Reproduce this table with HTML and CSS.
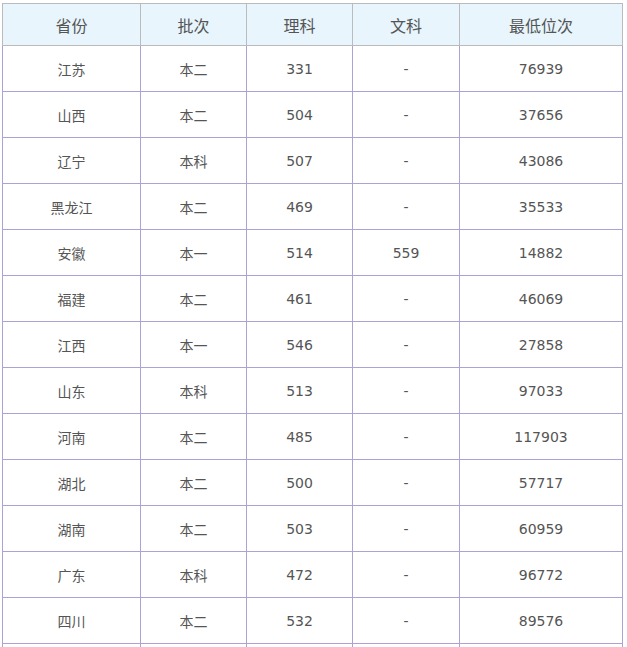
FILE: index.html
```html
<!DOCTYPE html>
<html lang="zh-CN">
<head>
<meta charset="utf-8">
<title>分数线</title>
<link rel="stylesheet" href="styles.css">
</head>
<body>
<table class="score-table">
  <colgroup>
    <col class="c1"><col class="c2"><col class="c3"><col class="c4"><col class="c5">
  </colgroup>
  <thead>
    <tr><th>省份</th><th>批次</th><th>理科</th><th>文科</th><th>最低位次</th></tr>
  </thead>
  <tbody>
    <tr><td>江苏</td><td>本二</td><td>331</td><td>-</td><td>76939</td></tr>
    <tr><td>山西</td><td>本二</td><td>504</td><td>-</td><td>37656</td></tr>
    <tr><td>辽宁</td><td>本科</td><td>507</td><td>-</td><td>43086</td></tr>
    <tr><td>黑龙江</td><td>本二</td><td>469</td><td>-</td><td>35533</td></tr>
    <tr><td>安徽</td><td>本一</td><td>514</td><td>559</td><td>14882</td></tr>
    <tr><td>福建</td><td>本二</td><td>461</td><td>-</td><td>46069</td></tr>
    <tr><td>江西</td><td>本一</td><td>546</td><td>-</td><td>27858</td></tr>
    <tr><td>山东</td><td>本科</td><td>513</td><td>-</td><td>97033</td></tr>
    <tr><td>河南</td><td>本二</td><td>485</td><td>-</td><td>117903</td></tr>
    <tr><td>湖北</td><td>本二</td><td>500</td><td>-</td><td>57717</td></tr>
    <tr><td>湖南</td><td>本二</td><td>503</td><td>-</td><td>60959</td></tr>
    <tr><td>广东</td><td>本科</td><td>472</td><td>-</td><td>96772</td></tr>
    <tr><td>四川</td><td>本二</td><td>532</td><td>-</td><td>89576</td></tr>
    <tr><td></td><td></td><td></td><td></td><td></td></tr>
  </tbody>
</table>
</body>
</html>
```

FILE: styles.css
```css
html, body {
  margin: 0;
  padding: 0;
  background: #fff;
}
body {
  padding: 3px 0 0 2px;
  font-family: "DejaVu Sans", "Noto Sans CJK SC", sans-serif;
  color: #555;
}
.score-table {
  border-collapse: collapse;
  table-layout: fixed;
  width: 620px;
}
.c1 { width: 138px; }
.c2 { width: 106px; }
.c3 { width: 106px; }
.c4 { width: 107px; }
.c5 { width: 163px; }
.score-table th {
  height: 41px;
  padding: 0;
  background: #e8f5fd;
  border: 1px solid #bbbbbb;
  font-weight: normal;
  font-size: 16px;
  color: #555;
  text-align: center;
  vertical-align: middle;
}
.score-table td {
  height: 45px;
  padding: 0;
  border: 1px solid #aba3d2;
  font-size: 14px;
  text-align: center;
  vertical-align: middle;
}
```
